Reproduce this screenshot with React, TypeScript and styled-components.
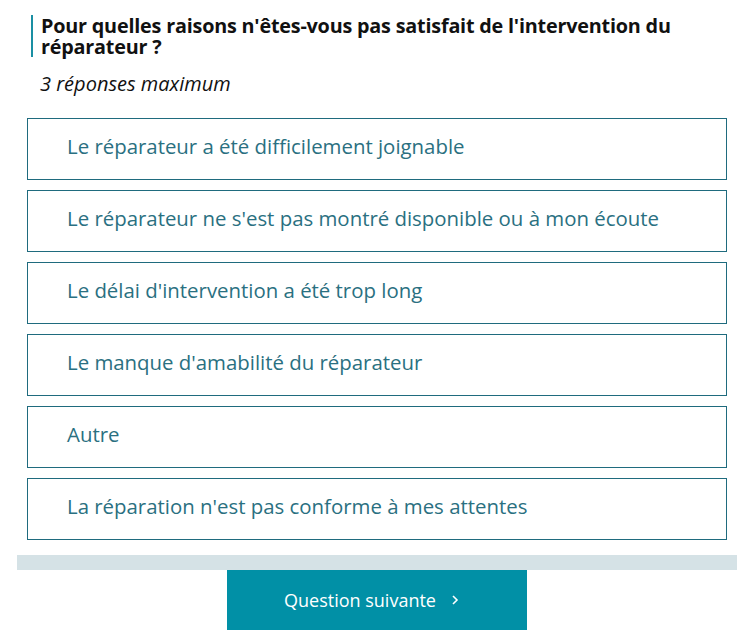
import React from "react";
import styled, { createGlobalStyle } from "styled-components";

const Global = createGlobalStyle`
  html, body { margin: 0; padding: 0; background: #fff; }
  body { font-family: "Open Sans", "Noto Sans", sans-serif; }
`;

const Page = styled.div`
  width: 720px;
  margin-left: 17px;
  padding-top: 15px;
`;

const Heading = styled.h2`
  margin: 0 0 0 14px;
  padding-left: 8px;
  max-width: 660px;
  border-left: 2px solid #1a8fa3;
  font-size: 19.8px;
  line-height: 21px;
  font-weight: 700;
  color: #111;
  letter-spacing: -0.2px;
`;

const Hint = styled.p`
  margin: 16px 0 0 23px;
  font-size: 20px;
  font-style: italic;
  color: #111;
  line-height: 22px;
`;

const List = styled.div`
  display: flex;
  flex-direction: column;
  gap: 10px;
  margin: 23px 0 0 10px;
  width: 700px;
`;

const Option = styled.button`
  box-sizing: border-box;
  height: 62px;
  border: 1px solid #1f6b7e;
  background: #fff;
  text-align: left;
  padding: 0 0 6px 39px;
  font-family: inherit;
  font-size: 20.4px;
  color: #2a7081;
  cursor: pointer;
`;

const Bar = styled.div`
  margin-top: 15px;
  height: 15px;
  background: #d5e2e6;
`;

const Footer = styled.div`
  display: flex;
  justify-content: center;
`;

const Next = styled.button`
  width: 300px;
  height: 60px;
  border: 0;
  background: #0190a6;
  color: #fff;
  font-family: inherit;
  font-size: 18px;
  display: flex;
  align-items: center;
  justify-content: center;
  gap: 14px;
  padding: 0 10px 0 0;
  cursor: pointer;
`;

const options = [
  "Le réparateur a été difficilement joignable",
  "Le réparateur ne s'est pas montré disponible ou à mon écoute",
  "Le délai d'intervention a été trop long",
  "Le manque d'amabilité du réparateur",
  "Autre",
  "La réparation n'est pas conforme à mes attentes",
];

export default function App() {
  return (
    <>
      <Global />
      <Page>
        <Heading>
          Pour quelles raisons n'êtes-vous pas satisfait de l'intervention du réparateur ?
        </Heading>
        <Hint>3 réponses maximum</Hint>
        <List>
          {options.map((o) => (
            <Option key={o}>{o}</Option>
          ))}
        </List>
        <Bar />
        <Footer>
          <Next>
            Question suivante
            <svg width="10" height="12" viewBox="0 0 10 12">
              <path d="M3 2l4 4-4 4" stroke="#fff" strokeWidth="1.6" fill="none" />
            </svg>
          </Next>
        </Footer>
      </Page>
    </>
  );
}
